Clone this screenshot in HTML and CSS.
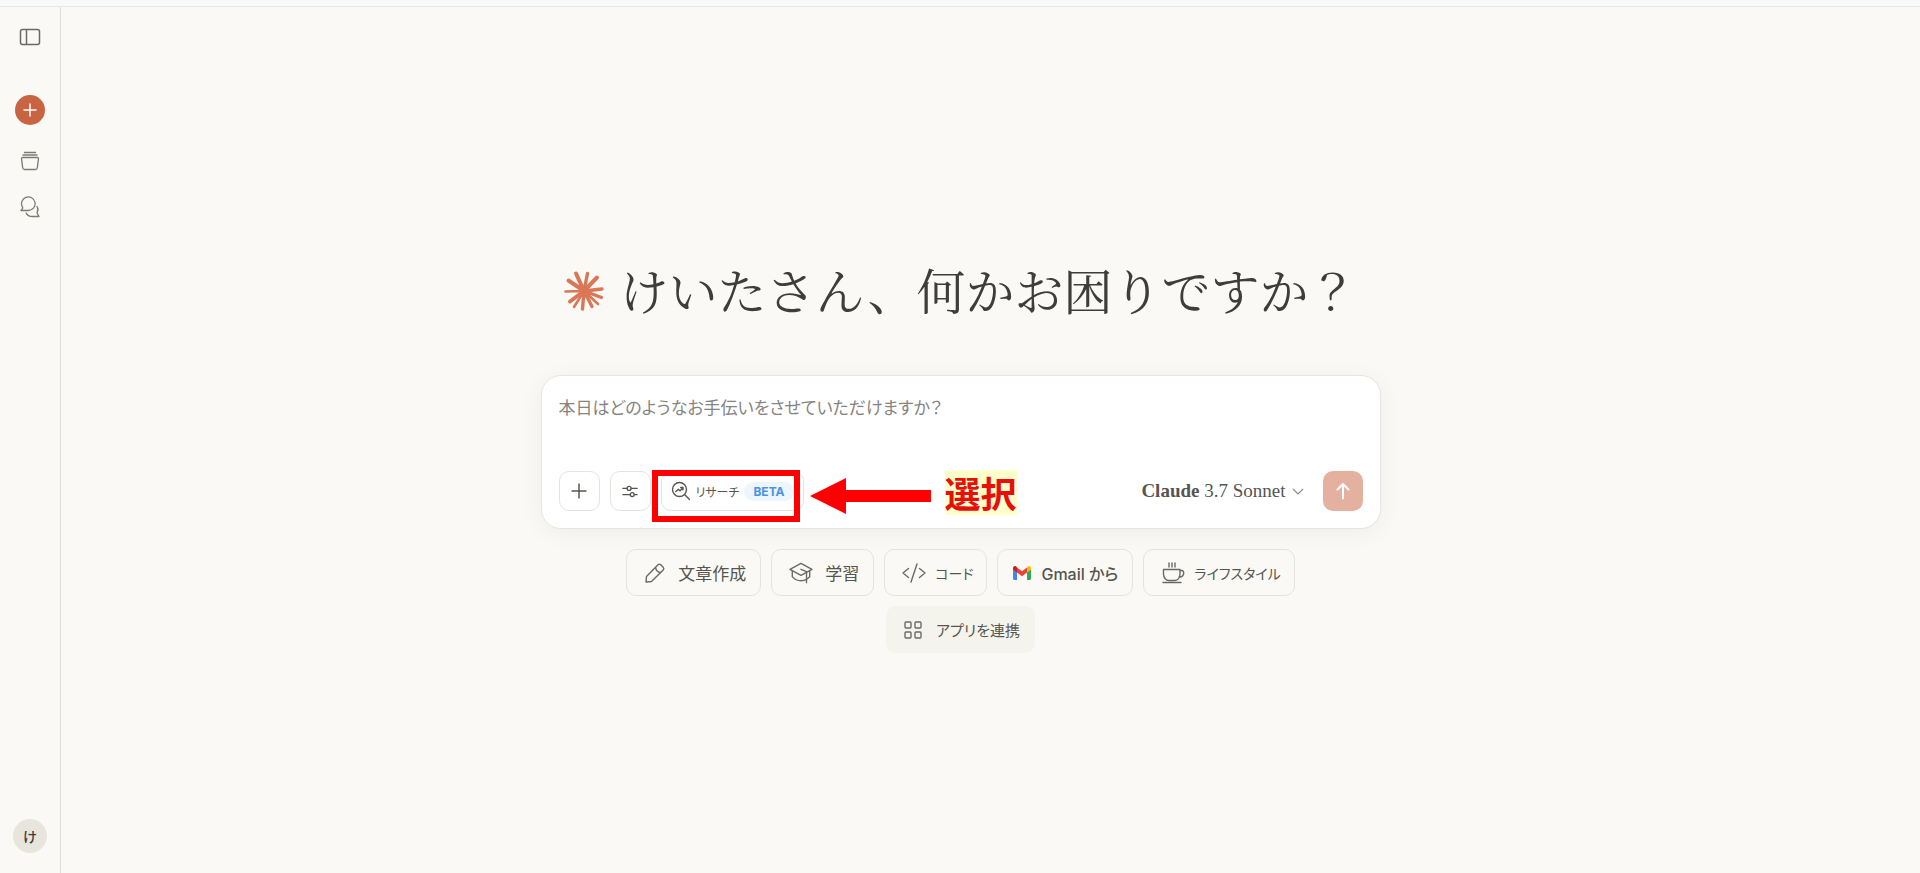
FILE: index.html
```
<!DOCTYPE html>
<html lang="ja">
<head>
  <meta charset="UTF-8">
  <meta name="viewport" content="width=device-width, initial-scale=1">
  <title>Claude</title>
  <link rel="stylesheet" href="styles.css">
</head>
<body>
  <div class="topbar"></div>
  <div class="app">
    <!-- サイドバー -->
    <nav class="sidebar" aria-label="メニュー">
      <button class="side-btn toggle" aria-label="サイドバーを開く">
        <svg width="22" height="18" viewBox="0 0 22 18" fill="none" stroke="#6b6a66" stroke-width="1.5"><rect x="1.5" y="1.5" width="19" height="15" rx="2"/><path d="M7.500 1.500v15"/></svg>
      </button>
      <button class="side-btn new-chat" aria-label="新規チャット">
        <svg width="14" height="14" viewBox="0 0 14 14" fill="none" stroke="#fff" stroke-width="1.5" stroke-linecap="round"><path d="M7 1v12M1 7h12"/></svg>
      </button>
      <a class="side-btn" href="#" aria-label="プロジェクト">
        <svg width="20" height="20" viewBox="0 0 20 20" fill="none" stroke="#7c7b76" stroke-width="1.3" stroke-linecap="round" stroke-linejoin="round"><path d="M4.500 1.500h11M3 4h14M2.500 6.500h15a1 1 0 0 1 1 1.200l-1.200 9a2 2 0 0 1-2 1.800H4.700a2 2 0 0 1-2-1.800l-1.200-9a1 1 0 0 1 1-1.200z"/></svg>
      </a>
      <a class="side-btn" href="#" aria-label="チャット">
        <svg width="20" height="22" viewBox="0 0 20 22" fill="none" stroke="#7c7b76" stroke-width="1.3" stroke-linecap="round" stroke-linejoin="round"><path d="M1 14.500h7.500a6.800 6.800 0 1 0-6-3.300c.3.500.3.800.1 1.200z"/><path d="M17 10.500c1.300 2 1.200 4 .2 5.800-.2.400-.2.700 0 1.100L19 20.500h-6.500c-2.700 0-5.300-1-6.400-3.500"/></svg>
      </a>
      <button class="avatar" aria-label="アカウント">け</button>
    </nav>

    <main class="main">
      <h1 class="greeting">
        <svg width="40" height="44" viewBox="0 -4 40 44" stroke="#d97757" fill="none" stroke-linecap="round" aria-hidden="true">
          <path stroke-width="4" d="M20 20 12 2.500M20 20 4.500 9.500M20 20 33 6.500M20 20 6 30.500"/>
          <path stroke-width="3.400" d="M20 20 23.500 2.500M20 20 38 18M20 20 18.500 38M20 20 28 35.500M20 20 37.500 26.500"/>
          <path stroke-width="2.600" d="M20 20 1.500 20.500M20 20 10 36M20 20 34 33"/>
        </svg>
        <span>けいたさん、何かお困りですか？</span>
      </h1>

      <!-- 入力欄 -->
      <form class="composer">
        <textarea class="prompt" rows="2" aria-label="メッセージ" placeholder="本日はどのようなお手伝いをさせていただけますか？"></textarea>
        <div class="toolbar">
          <button type="button" class="tool" aria-label="追加">
            <svg width="16" height="16" viewBox="0 0 16 16" fill="none" stroke="#565550" stroke-width="1.500"><path d="M8 .5v15M.5 8h15"/></svg>
          </button>
          <button type="button" class="tool" aria-label="設定">
            <svg width="16" height="13" viewBox="0 0 18 14" fill="none" stroke="#565550" stroke-width="1.500" stroke-linecap="round"><path d="M1 3.500h4.500M10.500 3.500H17M1 10.500h8M14 10.500h3"/><circle cx="11.500" cy="10.500" r="2.200"/><circle cx="8" cy="3.500" r="2.200"/></svg>
          </button>
          <button type="button" class="tool research">
            <svg width="20" height="20" viewBox="0 0 20 20" fill="none" stroke="#565550" stroke-width="1.400" stroke-linecap="round" stroke-linejoin="round"><circle cx="8.500" cy="8.500" r="7"/><path d="M13.800 13.800 18.500 18.500M4.800 10.500l2.500-2.200 1.700 1.500 3-3M9.700 6.500H12v2.300"/></svg>
            <span>リサーチ</span>
            <span class="beta">BETA</span>
          </button>
          <button type="button" class="model" aria-haspopup="listbox">
            <span><b>Claude</b> 3.7 Sonnet</span>
            <svg width="12" height="7" viewBox="0 0 12 7" fill="none" stroke="#8a8984" stroke-width="1.200"><path d="M1 1l5 5 5-5"/></svg>
          </button>
          <button type="submit" class="send" aria-label="送信">
            <svg width="16" height="18" viewBox="0 0 16 18" fill="none" stroke="#fff" stroke-width="2" stroke-linecap="round" stroke-linejoin="round"><path d="M8 16.500V2M2.500 7.500 8 2l5.500 5.500"/></svg>
          </button>
        </div>

        <!-- 注釈 -->
        <div class="note">
          <div class="note-box"></div>
          <svg class="note-arrow" width="121" height="36" viewBox="0 0 121 36" fill="#fe0000" aria-hidden="true"><path d="M0 18 36 0v12h85v12H36v12z"/></svg>
          <mark class="note-text">選択</mark>
        </div>
      </form>

      <div class="chips">
        <button class="chip">
          <svg width="22" height="22" viewBox="0 0 22 22" fill="none" stroke="#6b6a66" stroke-width="1.400" stroke-linejoin="round"><path d="M2 20l.5-5.500L14 2.800a2 2 0 0 1 2.800 0l2.400 2.400a2 2 0 0 1 0 2.800L7.500 19.500z"/><path d="M11.500 5.300c.5 3 2.200 4.800 5.200 5.200"/></svg>
          文章作成
        </button>
        <button class="chip">
          <svg width="24" height="22" viewBox="0 0 26 24" fill="none" stroke="#6b6a66" stroke-width="1.500" stroke-linejoin="round" stroke-linecap="round"><path d="M1 8 13 1.500 25 8l-12 6.500z"/><path d="M3.500 10v6c2.500 3 5.500 4.500 9.500 4.500 2.300 0 4.300-.5 6-1.500M22.500 10v6l-3.500 3M13 8l6 2.500V22.500"/></svg>
          学習
        </button>
        <button class="chip chip-kana">
          <svg width="24" height="20" viewBox="0 0 24 20" fill="none" stroke="#6b6a66" stroke-width="1.400" stroke-linejoin="round" stroke-linecap="round"><path d="M6.500 5.500 1 10l5.500 4.500M17.500 5.500 23 10l-5.500 4.500M15 1 9 19"/></svg>
          コード
        </button>
        <button class="chip chip-gmail">
          <svg width="18" height="14" viewBox="0 0 18 14"><path fill="#4285f4" d="M0 3v9.500C0 13.300.6 14 1.400 14H4V6z"/><path fill="#34a853" d="M14 6v8h2.600c.8 0 1.400-.7 1.400-1.500V3z"/><path fill="#fbbc04" d="M14 1.500V6.500L18 3.500V2c0-1.800-2-2.500-3.300-1.500z"/><path fill="#ea4335" d="M4 6.500v-5l5 3.800 5-3.800v5l-5 3.800z"/><path fill="#c5221f" d="M0 2v1.500l4 3v-5L3.300.5C2-.5 0 .3 0 2z"/></svg>
          <span>Gmail から</span>
        </button>
        <button class="chip chip-kana">
          <svg width="24" height="22" viewBox="0 0 24 22" fill="none" stroke="#6b6a66" stroke-width="1.400" stroke-linejoin="round" stroke-linecap="round"><path d="M2.500 7.500H19V12c0 4-2.500 6.500-5.500 6.500H8c-3 0-5.500-2.500-5.500-6.500zM19 8.500h1.500c3.500 0 3 7-2.500 6.500M2 20.500h18M8 1v4M11 1v4M14 1v4"/></svg>
          ライフスタイル
        </button>
        <button class="chip chip-connect">
          <svg width="18" height="18" viewBox="0 0 18 18" fill="none" stroke="#6b6a66" stroke-width="1.400"><rect x="1" y="1" width="6" height="6" rx="1"/><rect x="11" y="1" width="6" height="6" rx="1"/><rect x="1" y="11" width="6" height="6" rx="1"/><rect x="11" y="11" width="6" height="6" rx="1"/></svg>
          アプリを連携
        </button>
      </div>
    </main>
  </div>
</body>
</html>
```
FILE: styles.css
```
* {
  box-sizing: border-box;
}
body {
  margin: 0;
  min-height: 100vh;
  display: flex;
  flex-direction: column;
  background: #faf9f5;
  color: #565550;
  font-family: "Noto Sans CJK JP", sans-serif;
  font-feature-settings: "palt";
}
button, textarea {
  font: inherit;
  font-feature-settings: inherit;
  color: inherit;
}
button {
  padding: 0;
  border: 0;
  background: none;
  cursor: pointer;
}
svg {
  flex: none;
}
.topbar {
  height: 7px;
  background: #f7faf8;
  border-bottom: 1px solid #e2e8e4;
}
.app {
  flex: 1;
  display: flex;
}

/* サイドバー */
.sidebar {
  width: 61px;
  padding: 15px 0 20px;
  border-right: 1px solid #dedfda;
  display: flex;
  flex-direction: column;
  align-items: center;
  gap: 16px;
}
.side-btn {
  width: 30px;
  height: 30px;
  display: flex;
  align-items: center;
  justify-content: center;
}
.toggle {
  margin-bottom: 27px;
}
.new-chat {
  margin-bottom: 5px;
  border-radius: 50%;
  background: #c96442;
}
.avatar {
  width: 34px;
  height: 34px;
  margin-top: auto;
  border-radius: 50%;
  background: #e8e6dc;
  color: #3d3d3a;
  font-size: 14px;
  font-weight: 500;
}

/* メイン */
.main {
  flex: 1;
  display: flex;
  flex-direction: column;
  align-items: center;
  padding: 252px 60px 0 0;
}
.greeting {
  display: flex;
  align-items: center;
  gap: 16px;
  margin: 0 0 56px;
  color: #3d3d3a;
  font-family: "Noto Serif CJK JP", "Noto Sans CJK JP", serif;
  font-feature-settings: normal;
  font-size: 49px;
  font-weight: 400;
  line-height: 60px;
}
.composer {
  position: relative;
  width: 100%;
  max-width: 840px;
  padding: 16px 17px;
  border: 1px solid #e6e5e0;
  border-radius: 20px;
  background: #fff;
  box-shadow: 0 4px 24px rgba(0, 0, 0, 0.05);
}
.prompt {
  display: block;
  width: 100%;
  height: 79px;
  padding: 2px 0;
  border: 0;
  outline: 0;
  resize: none;
  background: none;
  font-size: 17px;
  line-height: 26px;
}
.prompt::placeholder {
  color: #85847f;
}
.toolbar {
  display: flex;
  align-items: center;
  gap: 10px;
  margin-bottom: 1px;
}
.tool {
  min-width: 41px;
  height: 40px;
  border: 1px solid #e4e3de;
  border-radius: 10px;
  display: flex;
  align-items: center;
  justify-content: center;
}
.research {
  gap: 5px;
  padding: 0 9px;
  font-size: 12px;
}
.beta {
  padding: 0 9px;
  border-radius: 10px;
  background: #edf5fd;
  color: #4a93e2;
  font-family: Inter, sans-serif;
  font-size: 12px;
  font-weight: 700;
  line-height: 19px;
}
.model {
  display: flex;
  align-items: center;
  gap: 6px;
  margin-left: auto;
  margin-right: 9px;
  font-family: "Liberation Serif", serif;
  font-size: 19px;
}
.send {
  width: 40px;
  height: 40px;
  border-radius: 10px;
  background: #e4b1a0;
  display: flex;
  align-items: center;
  justify-content: center;
}

/* 注釈 */
.note {
  position: absolute;
  left: 110px;
  top: 94px;
  display: flex;
  align-items: center;
  pointer-events: none;
}
.note-box {
  width: 148px;
  height: 52px;
  border: 6px solid #fe0000;
}
.note-arrow {
  margin: 0 14px 0 10px;
}
.note-text {
  align-self: flex-start;
  background: #ffffcc;
  color: #e60f0a;
  font-size: 36px;
  font-weight: 700;
  line-height: 45px;
}

.chips {
  display: flex;
  flex-wrap: wrap;
  justify-content: center;
  gap: 10px;
  max-width: 700px;
  margin-top: 20px;
}
.chip {
  height: 47px;
  padding: 0 14px 0 17px;
  border: 1px solid #e4e3de;
  border-radius: 10px;
  display: flex;
  align-items: center;
  gap: 12px;
  font-size: 17px;
}
.chip-kana {
  padding-right: 13px;
  gap: 9px;
  font-size: 14px;
}
.chip-gmail {
  padding-left: 15px;
  gap: 10px;
  font-family: Inter, "Noto Sans CJK JP", sans-serif;
  font-size: 16px;
  font-weight: 500;
}
.chip-connect {
  border-color: transparent;
  background: #f4f3ec;
  gap: 14px;
  font-size: 15px;
}
```
